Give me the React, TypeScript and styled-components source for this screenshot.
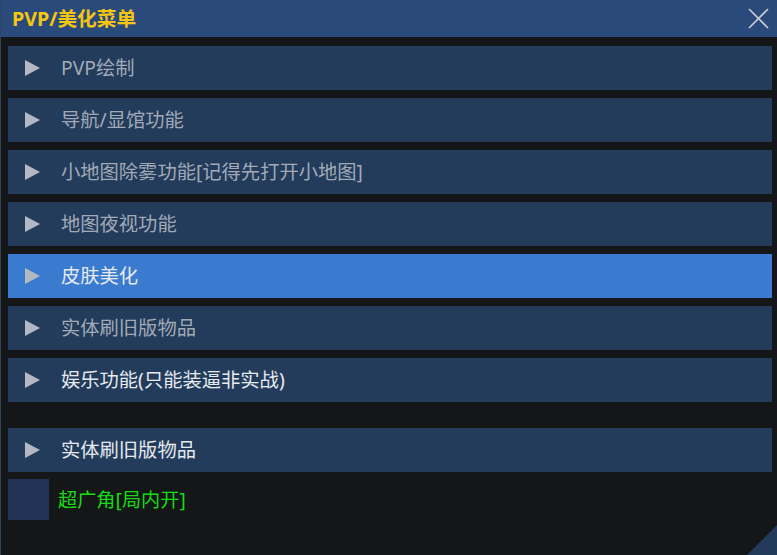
import React from 'react';
import styled, { createGlobalStyle } from 'styled-components';

const GlobalStyle = createGlobalStyle`
  html, body {
    margin: 0;
    padding: 0;
    background: #151618;
    overflow: hidden;
  }
  * {
    box-sizing: border-box;
  }
`;

const FONT = `"Noto Sans", "Noto Sans CJK SC", sans-serif`;

const Window = styled.div`
  position: relative;
  width: 777px;
  height: 555px;
  background: #151618;
  border-left: 1px solid #33455e;
  display: flex;
  flex-direction: column;
  font-family: ${FONT};
`;

const TitleBar = styled.div`
  height: 37px;
  flex-shrink: 0;
  background: #2a4a7b;
  display: flex;
  align-items: center;
  justify-content: space-between;
  padding: 0 8px 0 11px;
`;

const Title = styled.span`
  color: #f4c511;
  font-weight: bold;
  font-size: 19.7px;
  line-height: 1;
`;

const CloseButton = styled.button`
  width: 22px;
  height: 22px;
  padding: 0;
  border: none;
  background: transparent;
  display: flex;
  align-items: center;
  justify-content: center;
  cursor: pointer;
`;

const Body = styled.div`
  padding: 9px 5px 0 7px;
  display: flex;
  flex-direction: column;
  gap: 8px;
`;

const Row = styled.div<{ $active?: boolean }>`
  height: 44px;
  flex-shrink: 0;
  background: ${p => (p.$active ? '#3a7bcf' : '#233c5c')};
  display: flex;
  align-items: center;
  padding-left: 17px;
`;

const Arrow = styled.span`
  width: 0;
  height: 0;
  border-left: 15px solid #b2b9c3;
  border-top: 8px solid transparent;
  border-bottom: 8px solid transparent;
  margin-right: 21px;
`;

const Label = styled.span<{ $dim?: boolean }>`
  font-size: 19.3px;
  line-height: 1;
  color: ${p => (p.$dim ? '#a1aab6' : '#e6eaef')};
  white-space: nowrap;
`;

const Spacer = styled.div`
  height: 10px;
`;

const CheckRow = styled.label`
  display: flex;
  align-items: center;
  gap: 9px;
  margin-top: -1px;
`;

const CheckBox = styled.span`
  width: 41px;
  height: 41px;
  background: #213457;
`;

const CheckLabel = styled.span`
  font-size: 19.2px;
  line-height: 1;
  color: #14dd14;
  white-space: nowrap;
`;

const ResizeGrip = styled.div`
  position: absolute;
  right: 0;
  bottom: 0;
  width: 30px;
  height: 30px;
  background: #22395a;
  clip-path: polygon(100% 0, 100% 100%, 0 100%);
`;

const headers = [
  { text: 'PVP绘制', dim: true },
  { text: '导航/显馆功能', dim: true },
  { text: '小地图除雾功能[记得先打开小地图]', dim: true },
  { text: '地图夜视功能', dim: true },
  { text: '皮肤美化', active: true },
  { text: '实体刷旧版物品', dim: true },
  { text: '娱乐功能(只能装逼非实战)' },
];

const App: React.FC = () => {
  return (
    <>
      <GlobalStyle />
      <Window>
        <TitleBar>
          <Title>PVP/美化菜单</Title>
          <CloseButton aria-label="close">
            <svg width="21" height="21" viewBox="0 0 21 21">
              <path d="M1 1 L20 20 M20 1 L1 20" stroke="#c9cdd3" strokeWidth="1.6" fill="none" />
            </svg>
          </CloseButton>
        </TitleBar>
        <Body>
          {headers.map(h => (
            <Row key={h.text} $active={h.active}>
              <Arrow />
              <Label $dim={h.dim}>{h.text}</Label>
            </Row>
          ))}
          <Spacer />
          <Row>
            <Arrow />
            <Label>实体刷旧版物品</Label>
          </Row>
          <CheckRow>
            <CheckBox />
            <CheckLabel>超广角[局内开]</CheckLabel>
          </CheckRow>
        </Body>
        <ResizeGrip />
      </Window>
    </>
  );
};

export default App;
